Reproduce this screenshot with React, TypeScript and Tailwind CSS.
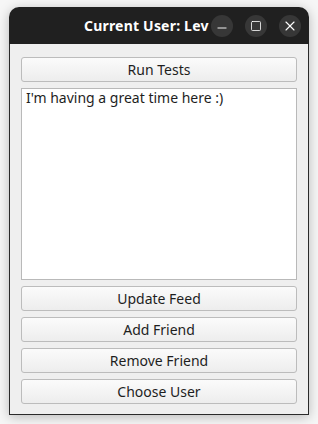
import { X, Minus, Square } from "lucide-react";

const buttonClass =
  "h-[25px] w-full rounded-[3px] border border-[#bcbcbc] bg-gradient-to-b from-[#fbfbfb] to-[#ededed] text-[14px] leading-none text-[#1e1e1e]";

function TitleButton({ children }: { children: React.ReactNode }) {
  return (
    <div className="flex h-[22px] w-[22px] items-center justify-center rounded-full bg-[#373737] text-white">
      {children}
    </div>
  );
}

export default function App() {
  return (
    <div
      className="h-[424px] w-[318px] overflow-hidden bg-[#f6f6f6] pl-[9px] pt-[7px]"
      style={{ fontFamily: '"Noto Sans", "Open Sans", sans-serif' }}
    >
      <div className="w-[300px] shadow-[0_2px_12px_rgba(0,0,0,0.25)] rounded-t-[10px]">
        {/* Title bar */}
        <div className="flex h-[37px] items-center rounded-t-[10px] bg-[#202020] pr-[8px]">
          <div className="flex-1 pl-[75px] text-[14px] font-bold tracking-[0.2px] text-white">
            Current User: Lev
          </div>
          <div className="flex items-center gap-[12px]">
            <TitleButton>
              <Minus size={14} strokeWidth={1.6} className="mt-[5px]" />
            </TitleButton>
            <TitleButton>
              <Square size={12} strokeWidth={1.6} />
            </TitleButton>
            <TitleButton>
              <X size={16} strokeWidth={1.6} />
            </TitleButton>
          </div>
        </div>

        {/* Body */}
        <div className="flex flex-col gap-[6px] border-x border-b border-[#2a2a2a] bg-[#efefef] px-[11px] pb-[10px] pt-[13px]">
          <button className={buttonClass}>Run Tests</button>
          <div className="h-[192px] border border-[#b9b9b9] bg-white px-[4px] text-[14px] leading-[18px] text-[#1e1e1e]">
            I'm having a great time here :)
          </div>
          <button className={buttonClass}>Update Feed</button>
          <button className={buttonClass}>Add Friend</button>
          <button className={buttonClass}>Remove Friend</button>
          <button className={buttonClass}>Choose User</button>
        </div>
      </div>
    </div>
  );
}
